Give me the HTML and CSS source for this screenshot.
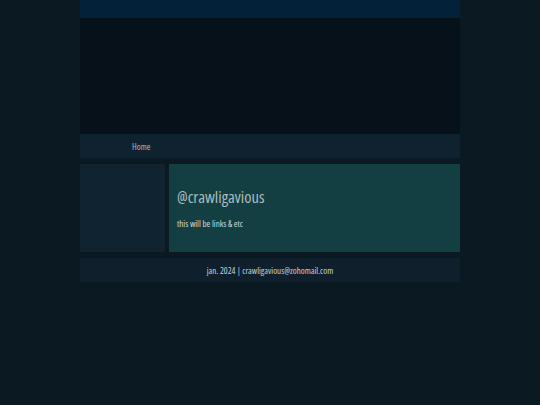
FILE: index.html
```html
<!DOCTYPE html>
<html>
<head>
<meta charset="utf-8">
<link rel="stylesheet" href="styles.css">
</head>
<body>
<div class="page">
  <div class="topbar"></div>
  <div class="hero"></div>
  <nav class="nav"><a class="nav-link">Home</a></nav>
  <div class="content">
    <aside class="sidebar"></aside>
    <main class="main">
      <h1 class="title">@crawligavious</h1>
      <p class="text">this will be links &amp; etc</p>
    </main>
  </div>
  <footer class="footer">jan. 2024 | crawligavious@zohomail.com</footer>
</div>
</body>
</html>
```
FILE: styles.css
```css
html, body {
  margin: 0;
  padding: 0;
  background: #0b1922;
  font-family: "Open Sans", Lato, sans-serif;
  font-stretch: 75%;
}
.page {
  width: 380px;
  margin: 0 auto;
  display: flex;
  flex-direction: column;
}
.topbar {
  height: 18px;
  background: #03223a;
}
.hero {
  height: 116px;
  background: #07111a;
}
.nav {
  height: 24px;
  background: #0f2230;
  display: flex;
  align-items: center;
  padding-left: 52px;
}
.nav-link {
  color: #a9b8c6;
  font-size: 9px;
}
.content {
  display: flex;
  gap: 4px;
  margin-top: 6px;
  height: 88px;
}
.sidebar {
  width: 85px;
  background: #0f2430;
}
.main {
  flex: 1;
  background: #133f42;
  padding: 0 8px;
  box-sizing: border-box;
}
.title {
  margin: 23px 0 0;
  font-size: 16.5px;
  font-weight: normal;
  color: #a9bcc0;
  line-height: 20px;
}
.text {
  margin: 11px 0 0;
  font-size: 9px;
  color: #d0dada;
  line-height: 11px;
}
.footer {
  margin-top: 6px;
  height: 24px;
  background: #0f1f2c;
  color: #c8d2da;
  font-size: 9px;
  display: flex;
  align-items: center;
  justify-content: center;
}
```
